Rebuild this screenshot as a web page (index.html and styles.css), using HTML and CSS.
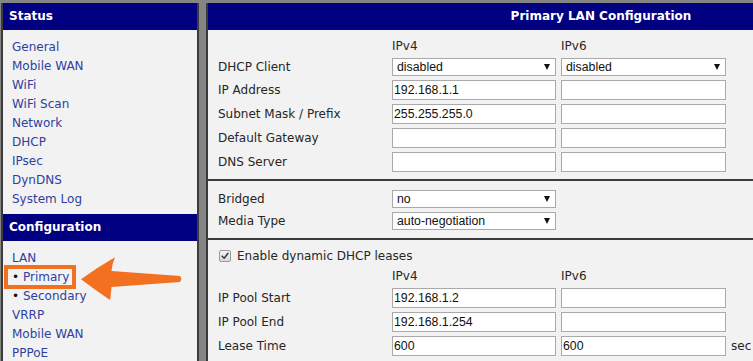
FILE: index.html
```html
<!DOCTYPE html>
<html lang="en">
<head>
<meta charset="utf-8">
<title>Primary LAN Configuration</title>
<link rel="stylesheet" href="styles.css">
</head>
<body>
<div class="page">
  <nav class="sidebar">
    <div class="side-head">Status</div>
    <ul class="side-list">
      <li><a href="#">General</a></li>
      <li><a href="#">Mobile WAN</a></li>
      <li><a href="#">WiFi</a></li>
      <li><a href="#">WiFi Scan</a></li>
      <li><a href="#">Network</a></li>
      <li><a href="#">DHCP</a></li>
      <li><a href="#">IPsec</a></li>
      <li><a href="#">DynDNS</a></li>
      <li><a href="#">System Log</a></li>
    </ul>
    <div class="side-head">Configuration</div>
    <ul class="side-list">
      <li><a href="#">LAN</a></li>
      <li class="sub"><a href="#">Primary</a></li>
      <li class="sub"><a href="#">Secondary</a></li>
      <li><a href="#">VRRP</a></li>
      <li><a href="#">Mobile WAN</a></li>
      <li><a href="#">PPPoE</a></li>
    </ul>
  </nav>

  <main class="panel">
    <div class="panel-head">Primary LAN Configuration</div>

    <section class="sec sec-ip">
      <div class="grid">
        <span></span><span class="colhead">IPv4</span><span class="colhead">IPv6</span><span></span>
        <label>DHCP Client</label>
        <div class="sel"><select><option>disabled</option></select></div>
        <div class="sel"><select><option>disabled</option></select></div>
        <span></span>
        <label>IP Address</label>
        <input type="text" value="192.168.1.1">
        <input type="text" value="">
        <span></span>
        <label>Subnet Mask / Prefix</label>
        <input type="text" value="255.255.255.0">
        <input type="text" value="">
        <span></span>
        <label>Default Gateway</label>
        <input type="text" value="">
        <input type="text" value="">
        <span></span>
        <label>DNS Server</label>
        <input type="text" value="">
        <input type="text" value="">
        <span></span>
      </div>
    </section>

    <section class="sec sec-media">
      <div class="grid">
        <label>Bridged</label>
        <div class="sel"><select><option>no</option></select></div>
        <span></span><span></span>
        <label>Media Type</label>
        <div class="sel"><select><option>auto-negotiation</option></select></div>
        <span></span><span></span>
      </div>
    </section>

    <section class="sec sec-dhcp">
      <div class="check-row">
        <span class="check" aria-hidden="true">
          <svg width="12" height="12" viewBox="0 0 12 12"><path d="M2.6 6.2 L5 8.6 L9.6 2.8" fill="none" stroke="#3a3a3a" stroke-width="1.8" stroke-linecap="round" stroke-linejoin="round"/></svg>
        </span>
        <span>Enable dynamic DHCP leases</span>
      </div>
      <div class="grid">
        <span></span><span class="colhead">IPv4</span><span class="colhead">IPv6</span><span></span>
        <label>IP Pool Start</label>
        <input type="text" value="192.168.1.2">
        <input type="text" value="">
        <span></span>
        <label>IP Pool End</label>
        <input type="text" value="192.168.1.254">
        <input type="text" value="">
        <span></span>
        <label>Lease Time</label>
        <input type="text" value="600">
        <input type="text" value="600">
        <span class="unit">sec</span>
      </div>
    </section>
  </main>
</div>

<div class="callout-box"></div>
<svg class="callout-arrow" width="106" height="50" viewBox="0 0 106 50" aria-hidden="true">
  <path d="M3 25.3 Q20 13 37 3.3 Q34 10 33.5 17 L102 22 Q104.5 25 102 28 L33.5 33 Q33 40 32 46 Q17 36 3 25.3 Z" fill="#f37021"/>
</svg>
</body>
</html>
```

FILE: styles.css
```css
* { box-sizing: border-box; }

html, body { margin: 0; }

body {
  background: #858585;
  overflow: hidden;
  font-family: "DejaVu Sans", Verdana, sans-serif;
  font-size: 12px;
  color: #262626;
  position: relative;
}

.page {
  display: flex;
  gap: 7px;
  width: 100vw;
  height: 100vh;
  padding: 3px 0 0 1px;
  overflow: hidden;
}

.sidebar {
  flex: none;
  width: 198px;
  background: #f2f2f2;
  border-left: 2px solid #3b3b3b;
  border-right: 2px solid #3b3b3b;
}

.side-head,
.panel-head {
  background: #000080;
  color: #fff;
  font-weight: bold;
  height: 27px;
  line-height: 27px;
}

.side-head { padding-left: 6px; }

.side-list {
  list-style: none;
  margin: 0;
  padding: 8px 0 5px 9px;
}

.side-list li { line-height: 19px; }

.side-list a {
  color: #2f3f9f;
  text-decoration: none;
}

.side-list .sub::before {
  content: "\2022";
  display: inline-block;
  width: 11px;
  color: #111;
}

.panel {
  flex: 1;
  min-width: 0;
  overflow: hidden;
  background: #f2f2f2;
  border-left: 2px solid #3b3b3b;
}

.panel-head {
  width: 786px;
  text-align: center;
}

.sec {
  padding: 8px 0 7px 10px;
  border-bottom: 2px solid #3b3b3b;
}

.sec-media { padding-top: 9px; padding-bottom: 8px; }

.sec-dhcp { border-bottom: none; }

.grid {
  display: grid;
  grid-template-columns: 169px 164px 165px auto;
  column-gap: 5px;
  row-gap: 4px;
  align-items: center;
}

.grid label,
.colhead,
.unit { line-height: 16px; }

input[type="text"] {
  display: block;
  width: 100%;
  height: 20px;
  margin: 0;
  padding: 0 1px;
  border: 1px solid #a9a9a9;
  background: #fff;
  font-family: "Liberation Sans", Arial, sans-serif;
  font-size: 12.3px;
  color: #111;
}

.sel {
  position: relative;
  height: 18px;
}

.sel select {
  appearance: none;
  -webkit-appearance: none;
  display: block;
  width: 100%;
  height: 18px;
  margin: 0;
  padding: 0 0 0 4px;
  border: 1px solid #a9a9a9;
  border-radius: 0;
  background: #fff;
  font-family: "Liberation Sans", Arial, sans-serif;
  font-size: 12.3px;
  color: #111;
}

.sel::after {
  content: "";
  position: absolute;
  right: 6px;
  top: 6px;
  border-left: 3.5px solid transparent;
  border-right: 3.5px solid transparent;
  border-top: 6px solid #111;
  pointer-events: none;
}

.check-row {
  display: flex;
  align-items: center;
  gap: 6px;
  height: 16px;
  margin-bottom: 4px;
}

.check {
  display: flex;
  align-items: center;
  justify-content: center;
  width: 12px;
  height: 12px;
  margin-left: 1px;
  border: 1px solid #9a9a9a;
  border-radius: 2px;
  background: linear-gradient(#f4f4f4, #d8d8d8);
}

.check svg { display: block; }

.callout-box {
  position: absolute;
  left: 4px;
  top: 265px;
  width: 72px;
  height: 24px;
  border: 4px solid #f37021;
}

.callout-arrow {
  position: absolute;
  left: 78px;
  top: 254px;
}
```
